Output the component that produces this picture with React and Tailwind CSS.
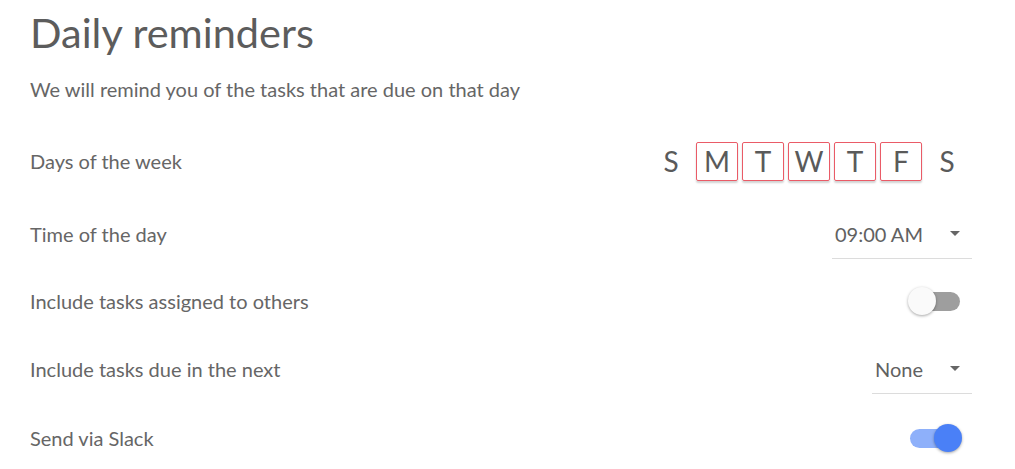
import { useState } from "react";

const DAYS = [
  { key: "sun", label: "S", on: false },
  { key: "mon", label: "M", on: true },
  { key: "tue", label: "T", on: true },
  { key: "wed", label: "W", on: true },
  { key: "thu", label: "T", on: true },
  { key: "fri", label: "F", on: true },
  { key: "sat", label: "S", on: false },
];

function Caret() {
  return (
    <svg width="10" height="5" viewBox="0 0 10 5" className="fill-[#666]">
      <path d="M0 0h10L5 5z" />
    </svg>
  );
}

function Select({ value, width }) {
  return (
    <div
      className={`flex items-center justify-between border-b border-[#dcdcdc] pl-[3px] pr-3 py-3 text-[20px] leading-[24px] text-[#616161] ${width}`}
    >
      <span>{value}</span>
      <Caret />
    </div>
  );
}

function Toggle({ checked, onChange }) {
  return (
    <button
      onClick={() => onChange(!checked)}
      className="relative h-[28px] w-[54px] mr-[10px]"
    >
      <span
        className={`absolute left-[2px] top-[5px] h-[19px] w-[50px] rounded-full ${
          checked ? "bg-[#8eb0fa]" : "bg-[#9e9e9e]"
        }`}
      />
      <span
        className={`absolute top-0 h-[28px] w-[28px] rounded-full shadow-[0_1px_3px_rgba(0,0,0,0.35)] ${
          checked ? "left-[26px] bg-[#4a80f7]" : "left-0 bg-[#fafafa]"
        }`}
      />
    </button>
  );
}

function Row({ label, height, children }) {
  return (
    <div className={`flex items-center justify-between ${height}`}>
      <span className="text-[20px] text-[#666]">{label}</span>
      {children}
    </div>
  );
}

export default function App() {
  const [others, setOthers] = useState(false);
  const [slack, setSlack] = useState(true);

  return (
    <div
      className="min-h-screen bg-white pl-[30px] pr-[43px] pt-2"
      style={{ fontFamily: "Lato, 'Open Sans', sans-serif" }}
    >
      <h1 className="text-[41.5px] leading-[48px] font-normal text-[#5c5c5c]">Daily reminders</h1>
      <p className="mt-[21px] text-[20px] leading-[24px] text-[#666]">
        We will remind you of the tasks that are due on that day
      </p>

      <div className="mt-[24px]">
        <Row label="Days of the week" height="h-[72px]">
          <div className="mr-1 flex gap-1">
            {DAYS.map((d) => (
              <div
                key={d.key}
                className={`flex h-[39px] w-[42px] items-center justify-center rounded-[2px] text-[28px] leading-none text-[#5a5a5a] ${
                  d.on ? "border border-[#ea5b67] shadow-[0_2px_2px_rgba(0,0,0,0.18)]" : ""
                }`}
              >
                {d.label}
              </div>
            ))}
          </div>
        </Row>
        <Row label="Time of the day" height="h-[74px]">
          <Select value="09:00 AM" width="w-[140px]" />
        </Row>
        <Row label="Include tasks assigned to others" height="h-[60px]">
          <Toggle checked={others} onChange={setOthers} />
        </Row>
        <Row label="Include tasks due in the next" height="h-[76px]">
          <Select value="None" width="w-[100px]" />
        </Row>
        <Row label="Send via Slack" height="h-[62px]">
          <Toggle checked={slack} onChange={setSlack} />
        </Row>
      </div>
    </div>
  );
}
